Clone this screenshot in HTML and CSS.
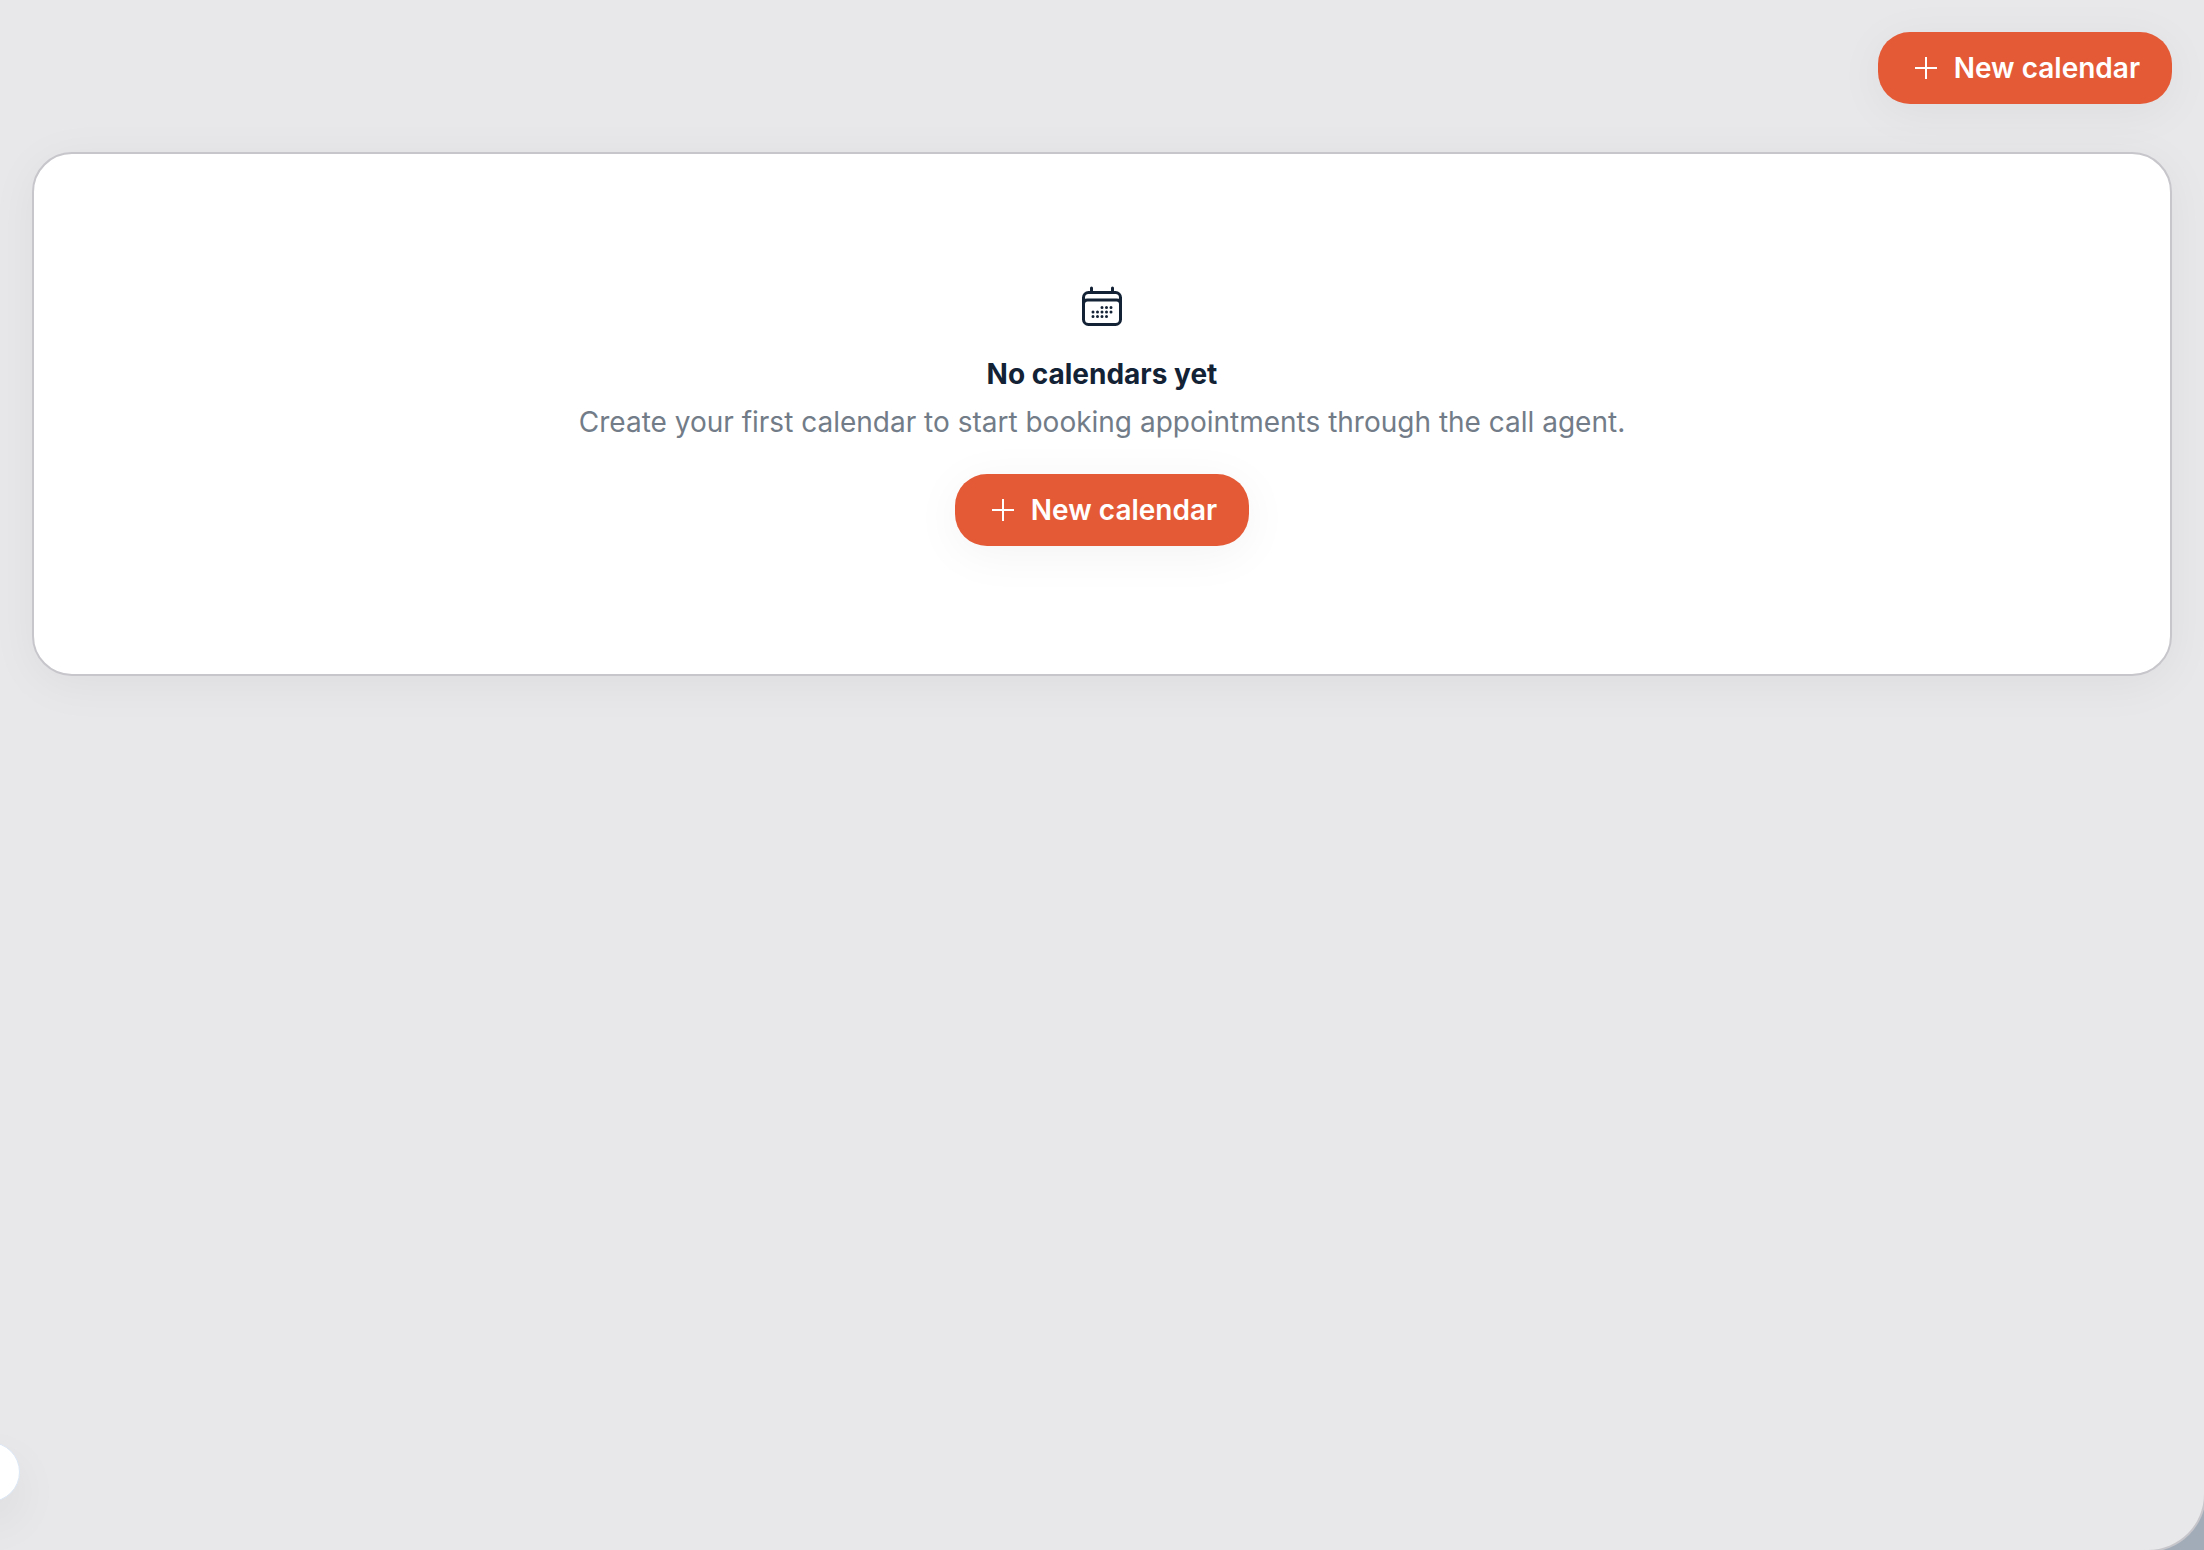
FILE: index.html
```html
<!DOCTYPE html>
<html lang="en">
<head>
    <meta charset="UTF-8" />
    <meta name="viewport" content="width=device-width, initial-scale=1.0">
    <title>Calendars</title>
    <link rel="stylesheet" href="styles.css">
</head>
<body>
    <main class="panel">
        <header class="toolbar">
            <button class="btn" type="button">
                <svg class="btn-icon" viewBox="0 0 32 32" aria-hidden="true"><path d="M5 16h22M16 5v22"/></svg>
                New calendar
            </button>
        </header>
        <section class="card">
            <svg class="card-icon" viewBox="0 0 48 48" aria-hidden="true">
                <rect x="5.5" y="10.5" width="37" height="32" rx="5"/>
                <path d="M5.5 23v-1q0-4 4-4h29q4 0 4 4v1M13.5 6v4M34.5 6v4"/>
                <path class="dots" d="M24 25.5h0M28.5 25.5h0M33 25.5h0M15 30h0M19.5 30h0M24 30h0M28.5 30h0M33 30h0M15 34.5h0M19.5 34.5h0M24 34.5h0M28.5 34.5h0"/>
            </svg>
            <h1 class="title">No calendars yet</h1>
            <p class="text">Create your first calendar to start booking appointments through the call agent.</p>
            <button class="btn" type="button">
                <svg class="btn-icon" viewBox="0 0 32 32" aria-hidden="true"><path d="M5 16h22M16 5v22"/></svg>
                New calendar
            </button>
        </section>
    </main>
    <button class="toggle" type="button" aria-label="Toggle sidebar"></button>
</body>
</html>
```

FILE: styles.css
```css
*{
    margin:0;
    padding:0;
    box-sizing:border-box;
}
body{
    background:#a2acb9;
    color:#132235;
    font-family:Inter,"Liberation Sans",sans-serif;
    font-size:28px;
    line-height:40px;
}
.panel{
    min-height:100vh;
    padding:32px;
    display:flex;
    flex-direction:column;
    gap:48px;
    background:#e8e8ea;
    border-radius:0 0 56px 0;
    box-shadow:0 0 0 2px #c6c6cb;
}
.toolbar{
    display:flex;
    justify-content:flex-end;
}
.btn{
    display:inline-flex;
    align-items:center;
    gap:12px;
    padding:16px 32px;
    border:none;
    border-radius:32px;
    background:#e45a37;
    color:#fff;
    font:inherit;
    font-weight:600;
    box-shadow:0 8px 48px rgba(20,20,60,.05);
    cursor:pointer;
}
.btn-icon{
    width:32px;
    height:32px;
    fill:none;
    stroke:#fff;
    stroke-width:2;
}
.card{
    display:flex;
    flex-direction:column;
    align-items:center;
    padding:128px 32px;
    background:#fff;
    border:2px solid #c6c6cb;
    border-radius:40px;
    box-shadow:0 8px 48px rgba(20,20,60,.05);
    text-align:center;
}
.card-icon{
    width:48px;
    height:48px;
    margin-bottom:24px;
    fill:none;
    stroke:#132235;
    stroke-width:3;
    stroke-linecap:round;
}
.title{
    margin-bottom:8px;
    font-size:28px;
    font-weight:700;
}
.text{
    margin-bottom:32px;
    color:#727c88;
}
/* round handle, half hidden behind the left edge */
.toggle{
    position:fixed;
    left:-40px;
    bottom:48px;
    width:60px;
    height:60px;
    border:1px solid #dbe7f5;
    border-radius:50%;
    background:#fff;
    box-shadow:0 20px 50px rgba(0,0,0,.06);
    cursor:pointer;
}
```
